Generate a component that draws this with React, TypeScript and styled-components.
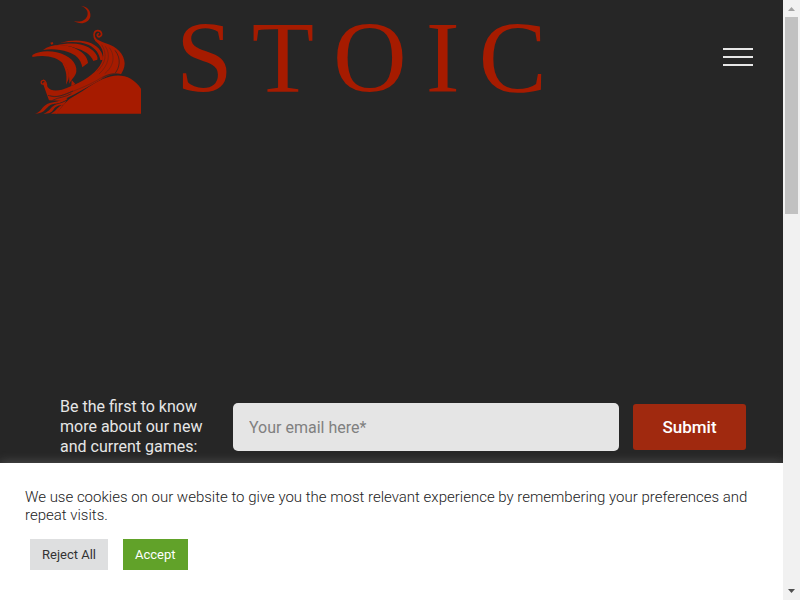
import React from "react";
import styled, { createGlobalStyle } from "styled-components";

const GlobalStyle = createGlobalStyle`
  *, *::before, *::after { box-sizing: border-box; }
  body {
    margin: 0;
    background: #262626;
    font-family: Roboto, "Liberation Sans", sans-serif;
  }
  button, input { font-family: inherit; }
`;

const Shell = styled.div`
  display: grid;
  grid-template-columns: minmax(0, 1fr) 17px;
  min-height: 100vh;
`;

const Page = styled.div`
  display: flex;
  flex-direction: column;
  background: #262626;
`;

const Header = styled.header`
  display: flex;
  align-items: center;
  justify-content: space-between;
  padding: 0 30px 0 25px;
`;

const Brand = styled.a`
  display: flex;
  align-items: center;
  gap: 26px;
  color: #a61b00;
  text-decoration: none;
`;

const Emblem = styled.svg`
  display: block;
  width: 125px;
  height: 120px;
`;

const Wordmark = styled.span`
  display: flex;
  gap: 19px;
  padding-bottom: 4px;
  font-family: "Liberation Serif", serif;
  font-size: 102px;
  line-height: 116px;
`;

const MenuButton = styled.button`
  display: grid;
  gap: 6px;
  width: 30px;
  margin-bottom: 6px;
  padding: 0;
  border: 0;
  background: none;
  cursor: pointer;
`;

const MenuBar = styled.span`
  height: 2px;
  background: #e6e6e6;
`;

const Hero = styled.main`
  display: flex;
  flex: 1;
  flex-direction: column;
  justify-content: flex-end;
`;

const Signup = styled.form`
  display: flex;
  align-items: center;
  padding: 0 37px 6px 60px;
`;

const SignupLabel = styled.label`
  flex: 0 0 173px;
  padding-right: 24px;
  color: #e6e6e6;
  font-size: 16px;
  line-height: 20px;
`;

const EmailInput = styled.input`
  flex: 1;
  min-width: 0;
  height: 48px;
  margin-right: 14px;
  padding: 0 16px;
  border: 0;
  border-radius: 5px;
  background: #e5e5e5;
  color: #333;
  font-size: 16px;
  &::placeholder { color: #808080; opacity: 1; }
`;

const SubmitButton = styled.button`
  width: 113px;
  height: 46px;
  padding: 0;
  border: 0;
  border-radius: 3px;
  background: #a0290f;
  color: #fff;
  font-size: 17px;
  font-weight: 500;
  cursor: pointer;
`;

const CookieBar = styled.section`
  padding: 25px 25px 30px;
  background: #fff;
  box-shadow: 0 -1px 10px 0 rgba(172, 171, 171, 0.3);
  clip-path: inset(-20px 0 0 0);
`;

const CookieText = styled.p`
  margin: 0 0 15px;
  color: #222;
  font-size: 15px;
  font-weight: 300;
  line-height: 18px;
`;

const CookieActions = styled.div`
  display: flex;
  gap: 15px;
  padding: 0 5px;
`;

const CookieButton = styled.button<{ $primary?: boolean }>`
  height: 31px;
  padding: 0 12px;
  border: 0;
  background: ${(p) => (p.$primary ? "#61a229" : "#dedfe0")};
  color: ${(p) => (p.$primary ? "#fff" : "#333")};
  font-size: 13px;
  cursor: pointer;
`;

const ScrollTrack = styled.div`
  display: flex;
  flex-direction: column;
  align-items: center;
  justify-content: space-between;
  background: #f1f1f1;
`;

const ScrollTop = styled.div`
  display: grid;
`;

const ScrollThumb = styled.div`
  width: 13px;
  height: 197px;
  margin: 0 2px;
  background: #c1c1c1;
`;

const Arrow = styled.svg`
  display: block;
  width: 17px;
  height: 17px;
`;

function ShipEmblem() {
  return (
    <Emblem viewBox="0 0 375 360" aria-hidden="true">
      <g fill="#a61b00">
        <path d="M167 17C188 19 199 34 196 50C191 70 165 75 147 63C167 68 182 61 187 47C191 34 184 23 167 17Z" />
        <path d="M22 165C41 154 67 151 95 157C132 165 157 188 154 215C151 230 140 236 133 251C133 229 132 209 117 193C97 171 62 163 22 171Z" />
        <path d="M54 150C76 132 112 131 140 141C172 153 187 169 189 189L172 202C167 176 151 163 129 156C104 147 77 146 54 150Z" />
        <path d="M94 136C131 127 168 129 190 142C211 155 220 170 217 179L205 183C197 163 177 151 151 144C135 138 117 135 94 136Z" />
        <path d="M106 129C138 119 173 119 199 130C220 140 236 159 234 179L226 181C224 161 211 144 190 134C164 124 134 125 106 129Z" />
        <path d="M76 128L83 126L85 132L79 134Z" />
        <path d="M113 186C129 202 136 222 130 239L123 254C126 232 125 213 113 192Z" />
        <path d="M140 240L151 252L139 259Z" />
        <path d="M211 112C216 121 227 124 240 129C276 139 298 163 299 190C299 205 292 216 288 223C265 220 248 226 236 234L150 282L109 302L72 301C67 287 60 267 53 248L61 245C66 258 69 265 78 269C91 274 113 270 127 263C159 251 197 232 217 207C240 180 240 151 220 131C214 126 210 120 207 113Z" />
        <path d="M92 341C108 325 119 309 133 297C167 279 199 253 232 238C278 216 321 225 348 266V341Z" />
        <path d="M29 341C47 338 48 325 62 315C78 303 97 310 122 293L128 297C105 315 84 307 71 319C58 331 55 341 29 341Z" />
        <path d="M55 341C73 335 77 321 91 314C100 310 112 310 124 302L117 314C99 315 92 319 85 329C79 338 72 341 55 341Z" />
        <path d="M78 341C93 333 98 320 116 312L95 341Z" />
      </g>
      <g fill="none" stroke="#a61b00" strokeWidth="5" strokeLinecap="round">
        <path d="M214 123C204 112 205 93 217 92C230 91 234 106 224 110C217 112 214 103 220 101" />
        <path d="M57 252C47 255 46 243 54 241C61 239 67 254 64 262" strokeWidth="4" />
      </g>
      <g fill="none" stroke="#262626" strokeWidth="1">
        <path d="M241 139C258 163 251 196 222 222" />
        <path d="M253 143C274 171 263 202 239 221" />
        <path d="M270 151C291 178 282 204 271 219" strokeWidth="2" />
        <path d="M230 134C248 163 242 190 216 214" />
        <path d="M75 286C92 293 110 287 130 279C168 265 202 250 226 235C244 223 267 218 289 224" strokeWidth="1" />
        <path d="M230 236C246 223 267 218 289 224" strokeWidth="2" />
        <path d="M69 286C94 296 116 285 144 273" strokeWidth="2" />
        <path d="M82 301C103 291 120 292 139 281" strokeWidth="2" />
      </g>
    </Emblem>
  );
}

export default function App() {
  return (
    <>
      <GlobalStyle />
      <Shell>
        <Page>
          <Header>
            <Brand href="#" aria-label="Stoic">
              <ShipEmblem />
              <Wordmark>
                {"STOIC".split("").map((letter) => (
                  <span key={letter}>{letter}</span>
                ))}
              </Wordmark>
            </Brand>
            <MenuButton type="button" aria-label="Menu">
              <MenuBar />
              <MenuBar />
              <MenuBar />
            </MenuButton>
          </Header>
          <Hero>
            <Signup onSubmit={(e) => e.preventDefault()}>
              <SignupLabel htmlFor="email">
                Be the first to know more about our new and current games:
              </SignupLabel>
              <EmailInput id="email" type="email" placeholder="Your email here*" />
              <SubmitButton type="submit">Submit</SubmitButton>
            </Signup>
          </Hero>
          <CookieBar aria-label="Cookie consent">
            <CookieText>
              We use cookies on our website to give you the most relevant experience by
              remembering your preferences and repeat visits.
            </CookieText>
            <CookieActions>
              <CookieButton type="button">Reject All</CookieButton>
              <CookieButton type="button" $primary>
                Accept
              </CookieButton>
            </CookieActions>
          </CookieBar>
        </Page>
        <ScrollTrack aria-hidden="true">
          <ScrollTop>
            <Arrow viewBox="0 0 17 17">
              <path d="M5 11L8.5 7L12 11Z" fill="#a3a3a3" />
            </Arrow>
            <ScrollThumb />
          </ScrollTop>
          <Arrow viewBox="0 0 17 17">
            <path d="M5 6L12 6L8.5 10Z" fill="#505050" />
          </Arrow>
        </ScrollTrack>
      </Shell>
    </>
  );
}
